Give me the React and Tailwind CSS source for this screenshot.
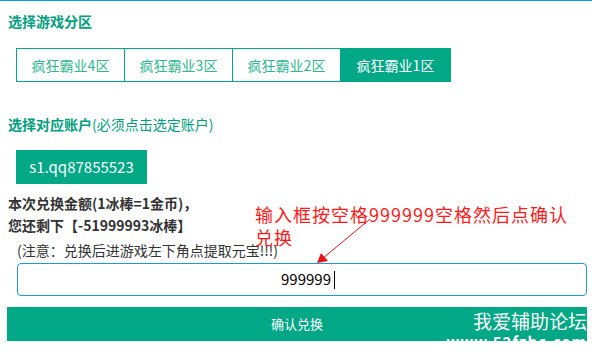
const tabs = ['疯狂霸业4区', '疯狂霸业3区', '疯狂霸业2区', '疯狂霸业1区'];

export default function App() {
    return (
        <div
            className="relative w-[592px] h-[356px] overflow-hidden bg-white border-t border-[#00a0e9]"
            style={{ fontFamily: '"Noto Sans CJK SC", "Open Sans", sans-serif' }}
        >
            <div className="pl-2 mt-[10px] text-[14px] leading-[20px] font-bold text-[#00a07e]">选择游戏分区</div>

            <div className="ml-4 mt-[17px] flex w-fit border border-[#00a886]">
                {tabs.map((t, i) => (
                    <div
                        key={t}
                        className={
                            i === tabs.length - 1
                                ? 'w-[109px] h-[32px] flex items-center justify-center text-[14px] bg-[#00a886] text-white'
                                : 'w-[108px] h-[32px] flex items-center justify-center text-[14px] text-[#2db88e] border-r border-[#00a886]'
                        }
                    >
                        {t}
                    </div>
                ))}
            </div>

            <div className="pl-2 mt-[32px] text-[14px] leading-[20px] text-[#00a07e]">
                <span className="font-bold">选择对应账户</span>(必须点击选定账户)
            </div>

            <div className="ml-4 mt-4 w-[131px] h-[34px] bg-[#00a886] text-white text-[15px] flex items-center justify-center">
                s1.qq87855523
            </div>

            <div className="pl-2 mt-2 text-[14px] leading-[22px] font-bold text-[#333]">
                <div>本次兑换金额(1冰棒=1金币)，</div>
                <div>您还剩下【-51999993冰棒】</div>
            </div>

            <div className="ml-[17px] mt-1 text-[14px] leading-[20px] text-[#333]">(注意：兑换后进游戏左下角点提取元宝!!!)</div>

            <div className="ml-[17px] mt-[3px] w-[570px] h-[33px] border border-[#1a9ad6] rounded-[4px] flex items-center justify-center text-[15px] text-black">
                <span className="pl-3">999999</span>
                <span className="ml-[3px] w-px h-[18px] bg-black"></span>
            </div>

            <div className="relative ml-[7px] mt-[11px] w-[580px] h-[34px] bg-[#00a886] text-white text-[13px] flex items-center justify-center overflow-hidden">
                确认兑换
                <div className="absolute right-0 top-[1px] text-right text-white">
                    <div className="text-[19px] leading-[25px]">我爱辅助论坛</div>
                    <div className="text-[15px] leading-[18px] font-bold tracking-[1px]">www.52fzbc.com</div>
                </div>
            </div>

            <div className="absolute left-[255px] top-[202px] w-[330px] text-[18px] leading-[23px] tracking-[1px] text-[#ff1a1a]">
                输入框按空格999999空格然后点确认
                <br />
                兑换
            </div>

            <svg className="absolute left-0 top-0" width="592" height="356" viewBox="0 0 592 356">
                <line x1="370" y1="218" x2="322" y2="258" stroke="#e8121b" strokeWidth="1" />
                <polygon points="317,262 321,252 328,260" fill="#e8121b" />
            </svg>
        </div>
    );
}
